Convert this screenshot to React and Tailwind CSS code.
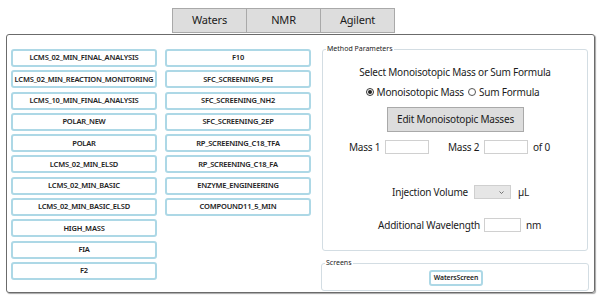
import React from 'react';

const leftMethods = [
    'LCMS_02_MIN_FINAL_ANALYSIS',
    'LCMS_02_MIN_REACTION_MONITORING',
    'LCMS_10_MIN_FINAL_ANALYSIS',
    'POLAR_NEW',
    'POLAR',
    'LCMS_02_MIN_ELSD',
    'LCMS_02_MIN_BASIC',
    'LCMS_02_MIN_BASIC_ELSD',
    'HIGH_MASS',
    'FIA',
    'F2',
];

const rightMethods = [
    'F10',
    'SFC_SCREENING_PEI',
    'SFC_SCREENING_NH2',
    'SFC_SCREENING_2EP',
    'RP_SCREENING_C18_TFA',
    'RP_SCREENING_C18_FA',
    'ENZYME_ENGINEERING',
    'COMPOUND11_5_MIN',
];

function MethodButton({ name }) {
    return (
        <button className="w-[146px] h-[18px] bg-white border-2 border-[#add8e6] rounded-[3px] text-[7.5px] font-semibold text-[#222] whitespace-nowrap tracking-[-0.2px] flex items-center justify-center">
            {name}
        </button>
    );
}

function App() {
    return (
        <div
            className="w-[602px] h-[299px] bg-white text-[#1b1b1b] overflow-hidden"
            style={{ fontFamily: '"Noto Sans", "Open Sans", sans-serif' }}
        >
            {/* tabs */}
            <div className="flex pt-[8px] pl-[172px]">
                {['Waters', 'NMR', 'Agilent'].map((t, i) => (
                    <div
                        key={t}
                        className={`w-[75px] h-[25px] bg-[#dddddd] border border-[#a9a9a9] flex items-center justify-center text-[11px] tracking-[-0.2px] ${i > 0 ? '-ml-px' : ''}`}
                    >
                        {t}
                    </div>
                ))}
            </div>

            {/* main panel */}
            <div className="ml-[6px] mt-[1px] w-[589px] h-[259px] border border-[#6b6b6b] rounded-[3px] shadow-[1px_1px_1px_rgba(0,0,0,0.35)] flex pt-[14px] pl-[4px]">
                <div className="w-[300px] flex gap-[8px]">
                    <div className="flex flex-col gap-[3.3px]">
                        {leftMethods.map((m) => (
                            <MethodButton key={m} name={m} />
                        ))}
                    </div>
                    <div className="flex flex-col gap-[3.3px]">
                        {rightMethods.map((m) => (
                            <MethodButton key={m} name={m} />
                        ))}
                    </div>
                </div>

                <div className="ml-[11px] flex flex-col">
                    {/* method parameters */}
                    <div className="relative w-[266px] h-[202px] border border-[#d3dde3] rounded-[3px] flex flex-col pt-[14px] text-[10px] tracking-[-0.2px]">
                        <span className="absolute -top-[7px] left-[3px] bg-white px-[1px] text-[7px] leading-[12px] tracking-normal">
                            Method Parameters
                        </span>
                        <div className="h-[16px] flex items-center justify-center whitespace-nowrap">
                            Select Monoisotopic Mass or Sum Formula
                        </div>
                        <div className="mt-[4px] h-[16px] flex items-center justify-center whitespace-nowrap -ml-[5px]">
                            <span className="w-[8px] h-[8px] rounded-full border border-[#333] flex items-center justify-center mr-[3px]">
                                <span className="w-[4px] h-[4px] rounded-full bg-[#222]" />
                            </span>
                            <span>Monoisotopic Mass</span>
                            <span className="w-[8px] h-[8px] rounded-full border border-[#555] ml-[4px] mr-[3px]" />
                            <span>Sum Formula</span>
                        </div>
                        <div className="mt-[7px] flex justify-center">
                            <button className="w-[137px] h-[25px] bg-[#dddddd] border border-[#a9a9a9] text-[10px] tracking-[-0.2px] whitespace-nowrap ml-[1px]">
                                Edit Monoisotopic Masses
                            </button>
                        </div>
                        <div className="mt-[8px] h-[14px] flex items-center pl-[26px] whitespace-nowrap">
                            <span className="w-[24px]">Mass 1</span>
                            <span className="ml-[12px] w-[44px] h-[14px] border border-[#d0d0d0] bg-white" />
                            <span className="ml-[19px] w-[31px]">Mass 2</span>
                            <span className="ml-[5px] w-[44px] h-[14px] border border-[#d0d0d0] bg-white" />
                            <span className="ml-[5px]">of 0</span>
                        </div>
                        <div className="mt-[31px] h-[14px] flex items-center pl-[69px] whitespace-nowrap">
                            <span className="w-[73px]">Injection Volume</span>
                            <span className="ml-[9px] w-[37px] h-[14px] border border-[#cfcfcf] bg-[#e6e6e6] flex items-center justify-end pr-[6px]">
                                <svg width="5" height="3" viewBox="0 0 5 3">
                                    <path d="M0.5 0.5 L2.5 2.5 L4.5 0.5" fill="none" stroke="#555" strokeWidth="0.8" />
                                </svg>
                            </span>
                            <span className="ml-[7px]">µL</span>
                        </div>
                        <div className="mt-[19px] h-[14px] flex items-center pl-[55px] whitespace-nowrap">
                            <span className="w-[100px]">Additional Wavelength</span>
                            <span className="ml-[6px] w-[37px] h-[14px] border border-[#d0d0d0] bg-white" />
                            <span className="ml-[5px]">nm</span>
                        </div>
                    </div>

                    {/* screens */}
                    <div className="relative mt-[12px] -ml-px w-[268px] h-[28px] border border-[#d3dde3] rounded-[3px] flex justify-center pt-[6px]">
                        <span className="absolute -top-[7px] left-[3px] bg-white px-[1px] text-[7px] leading-[12px]">
                            Screens
                        </span>
                        <button className="w-[54px] h-[16px] bg-white border-2 border-[#add8e6] rounded-[3px] text-[6.8px] font-semibold tracking-[-0.1px] flex items-center justify-center whitespace-nowrap ml-[2px]">
                            WatersScreen
                        </button>
                    </div>
                </div>
            </div>
        </div>
    );
}

export default App;
